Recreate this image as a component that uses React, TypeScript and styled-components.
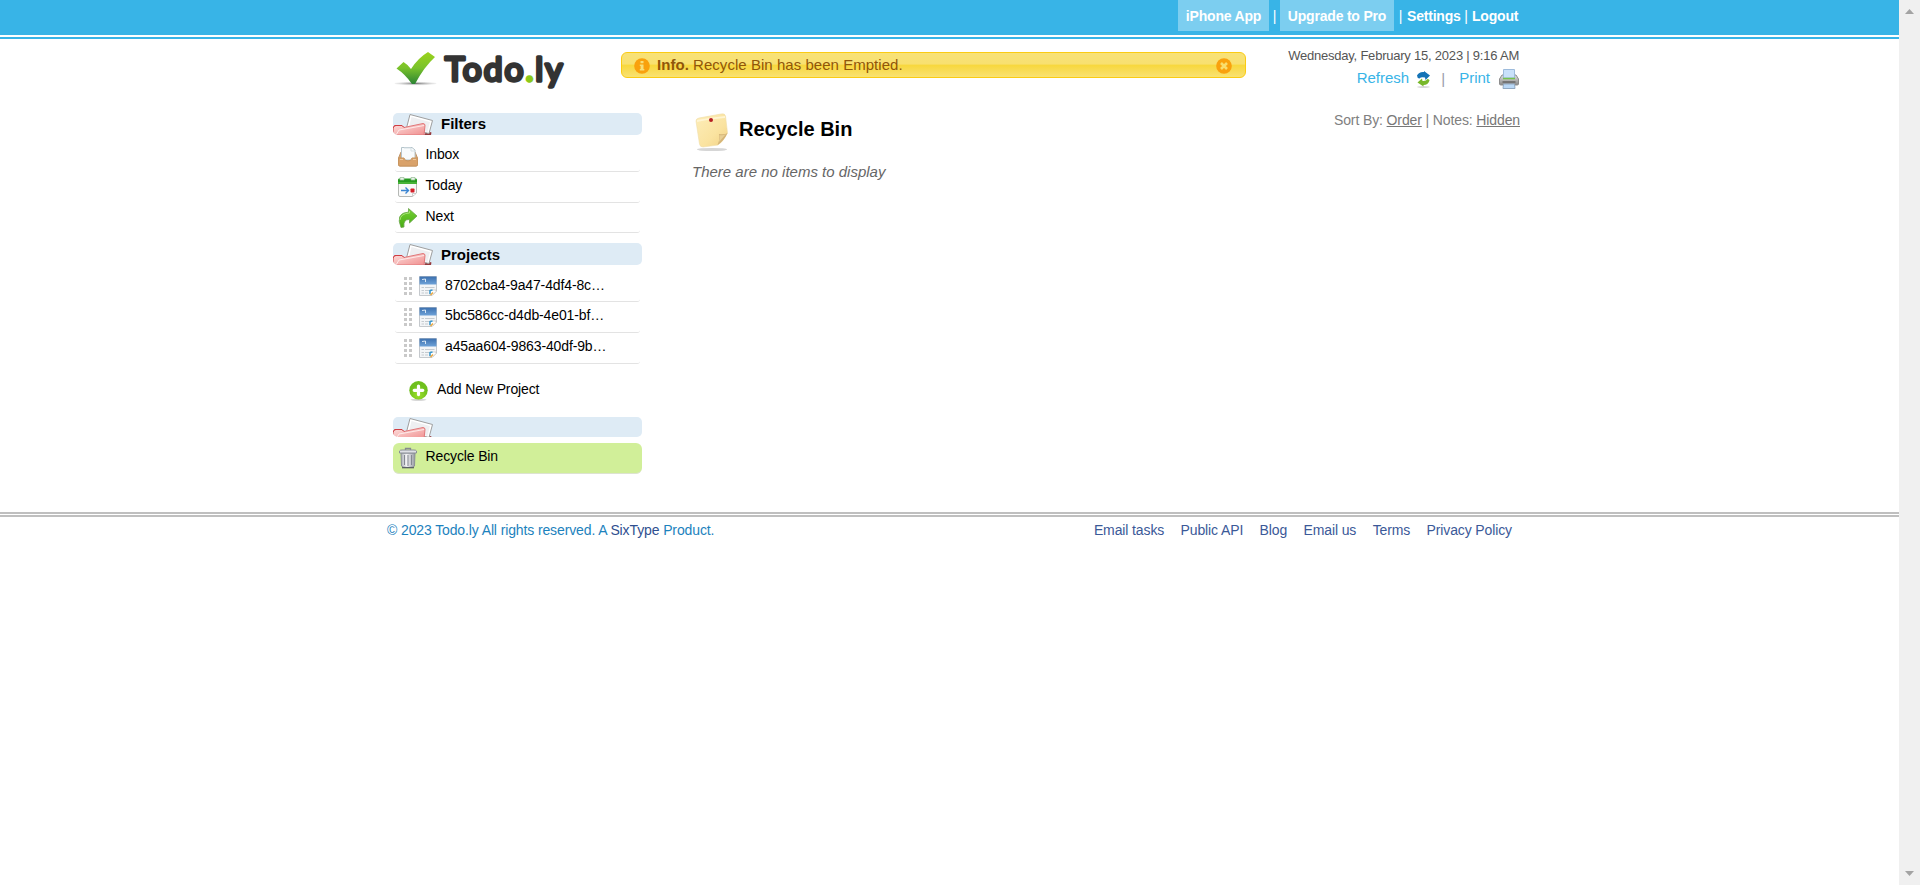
import React from 'react';
import styled, { createGlobalStyle } from 'styled-components';

const Global = createGlobalStyle`
  * { box-sizing: border-box; }
  body { margin: 0; background: #fff; font-family: Arial, "Liberation Sans", sans-serif; color: #000; overflow: hidden; }
  a { color: inherit; text-decoration: none; }
  svg { display: block; flex: none; }
`;

const Window = styled.div`
  display: flex;
  height: 885px;
`;
const Page = styled.div`
  flex: 1;
  min-width: 0;
`;
const Scrollbar = styled.div`
  width: 21px;
  background: #f0f0f0;
  display: flex;
  flex-direction: column;
  justify-content: space-between;
  align-items: center;
  padding: 9px 0;
`;

const TopBar = styled.header`
  height: 39px;
  background: #38b4e7;
  border-bottom: 2px solid #38b4e7;
  box-shadow: inset 0 -2px #fff;
`;
const Center = styled.div`
  width: 1132px;
  margin-left: 387px;
  display: flex;
`;
const TopNav = styled(Center)`
  justify-content: flex-end;
  font-size: 14px;
  letter-spacing: -0.2px;
  font-weight: bold;
  color: #fff;
  line-height: 32px;
`;
const TopLink = styled.a<{ $w: number }>`
  width: ${p => p.$w}px;
  height: 31px;
  white-space: nowrap;
`;
const TopTab = styled(TopLink)`
  background: #7ccef0;
  text-align: center;
`;
const Bar = styled.span<{ $w: number }>`
  width: ${p => p.$w}px;
  text-align: center;
  font-weight: normal;
`;

const Masthead = styled(Center)`
  height: 74px;
  align-items: flex-start;
`;
const Logo = styled.div`
  width: 234px;
  padding: 9px 0 0 7px;
  svg { overflow: visible; }
`;
const Notice = styled.div`
  width: 625px;
  height: 26px;
  margin-top: 13px;
  padding: 0 13px 0 12px;
  display: flex;
  align-items: center;
  border: 1px solid #fbcb13;
  border-radius: 6px;
  background: linear-gradient(#f8e278 0%, #f8e070 45%, #f8d83e 52%, #f8dc58 75%, #f9e272 100%);
  color: #915608;
  font-size: 15px;
  letter-spacing: 0.04px;
  line-height: 24px;
  svg { margin-top: 2px; }
`;
const NoticeText = styled.span`
  flex: 1;
  margin-left: 7px;
  padding-bottom: 1px;
`;
const Tools = styled.div`
  flex: 1;
  display: flex;
  flex-direction: column;
  align-items: flex-end;
  padding-top: 8px;
`;
const DateText = styled.div`
  font-size: 13px;
  letter-spacing: -0.22px;
  line-height: 18px;
  color: #555;
  white-space: nowrap;
`;
const ToolRow = styled.div`
  display: flex;
  align-items: center;
  height: 26px;
  font-size: 15px;
  color: #38b4e7;
  svg { margin-top: 2px; }
`;
const ToolLabel = styled.a<{ $gap: number }>`
  margin-right: ${p => p.$gap}px;
  padding-bottom: 1px;
`;
const ToolSep = styled.span`
  width: 28px;
  padding-left: 10px;
  color: #99a;
`;

const Body = styled(Center)`
  height: 399px;
  align-items: flex-start;
`;
const Sidebar = styled.nav`
  width: 249px;
  margin-left: 6px;
  font-size: 14px;
  letter-spacing: -0.13px;
`;
const SectionHead = styled.h2<{ $h?: number; $line?: number }>`
  margin: 0;
  height: ${p => p.$h ?? 22}px;
  display: flex;
  border-radius: 5px;
  overflow: hidden;
  background: #deebf5;
  font-size: 15px;
  letter-spacing: 0;
  line-height: ${p => p.$line ?? 21}px;
`;
const HeadLabel = styled.span`
  margin-left: 8px;
`;
const List = styled.ul<{ $top: number; $bottom: number }>`
  list-style: none;
  margin: 0;
  padding: ${p => p.$top}px 2px ${p => p.$bottom}px;
`;
const Item = styled.li<{ $h: number }>`
  height: ${p => p.$h}px;
  display: flex;
  align-items: center;
  border-bottom: 1px solid #e3e3e3;
  border-radius: 3px;
  padding-left: 2px;
`;
const ItemLabel = styled.span<{ $gap: number; $lift?: number }>`
  margin-left: ${p => p.$gap}px;
  padding-bottom: ${p => p.$lift ?? 3}px;
`;
const Grip = styled.span`
  display: flex;
  margin: 0 6px 0 7px;
`;
const AddRow = styled.div`
  height: 53px;
  display: flex;
  align-items: center;
  padding-left: 15px;
`;
const Selected = styled.div`
  margin-top: 6px;
  height: 31px;
  display: flex;
  align-items: center;
  padding-left: 5px;
  border-radius: 6px;
  border-bottom: 1px solid #dde3d0;
  background: #d1ef99;
`;

const Main = styled.main`
  flex: 1;
  margin-left: 50px;
`;
const TitleRow = styled.div`
  height: 40px;
  display: flex;
  align-items: flex-start;
`;
const Title = styled.h1`
  margin: 0 0 0 7px;
  font-size: 20px;
  line-height: 32px;
  flex: 1;
`;
const Sort = styled.div`
  font-size: 14px;
  letter-spacing: -0.12px;
  line-height: 15px;
  color: #808080;
  margin-right: -1px;
  u { color: #777; }
`;
const Empty = styled.p`
  margin: 10px 0 0;
  font-size: 15px;
  font-style: italic;
  line-height: 17px;
  color: #666;
`;

const Footer = styled.footer`
  border-top: 5px double #bfbfbf;
`;
const FootRow = styled(Center)`
  justify-content: space-between;
  font-size: 14px;
  letter-spacing: -0.12px;
  line-height: 16px;
  padding: 5px 7px 0 0;
  color: #1c82bd;
`;
const FootLinks = styled.div`
  display: flex;
  gap: 16.4px;
  color: #3b5998;
`;
const Brand = styled.a`
  color: #2f4f8f;
`;

const LogoArt = () => (
  <svg width="180" height="50" viewBox="0 0 180 50">
    <defs>
      <linearGradient id="chk" x1="0" y1="0" x2="0" y2="1">
        <stop offset="0" stopColor="#9bd31c" /><stop offset=".5" stopColor="#79c22b" /><stop offset="1" stopColor="#2b8434" />
      </linearGradient>
      <radialGradient id="shade"><stop offset="0" stopColor="#777" /><stop offset="1" stopColor="#bbb" stopOpacity=".2" /></radialGradient>
    </defs>
    <ellipse cx="21.500" cy="35.500" rx="21" ry="1.700" fill="url(#shade)" />
    <path d="M2.500 20.500 L9.500 14 Q13 16 17 21 Q24 10 34 4 L41 9 Q30 19 21 36 L18 36 Q11 26 2.500 20.500Z" fill="url(#chk)" />
    <text x="51" y="32.500" fontFamily="Lato, sans-serif" fontSize="33.500" fontWeight="400" letterSpacing="2" fill="#333" stroke="#333" strokeWidth="3.400" strokeLinejoin="round">
      Todo<tspan fill="#8cc919" stroke="#8cc919">.</tspan>ly
    </text>
  </svg>
);

const FolderArt = () => (
  <svg width="40" height="22" viewBox="0 0 40 22">
    <defs><linearGradient id="fold" x1="0" y1="0" x2="1" y2="1"><stop offset="0" stopColor="#fde0de" /><stop offset="1" stopColor="#f08f8f" /></linearGradient></defs>
    <path d="M31 22 L34 18 L38.500 19.500 L38 22Z" fill="#963a3d" />
    <path d="M17 1.500 L39.500 7.500 L36 20.500 L13.500 15Z" fill="#fff" stroke="#9e9e9e" />
    <path d="M18.500 4 L37 9 L34.500 19 L16 14Z" fill="#eeeff1" />
    <path d="M.500 22 V14 L3 12.500 H9 L11 14.500 L30 10.500 Q32 10.500 32 12.500 L31 22Z" fill="url(#fold)" stroke="#e0787a" />
    <path d="M0 15 L1.500 12.500 H9 L11 14.500" fill="none" stroke="#d03c42" />
    <path d="M3 22 L6 17 L31 12.500" fill="none" stroke="#fde9e8" />
  </svg>
);

const InboxArt = () => (
  <svg width="22" height="21" viewBox="0 0 22 21">
    <path d="M4 6 H18 L20.500 12 V18.500 Q20.500 20 19 20 H3 Q1.500 20 1.500 18.500 V12Z" fill="#dba56b" stroke="#c09468" />
    <path d="M4.500 1.500 H15 L18 4 V14 H4.500Z" fill="#f8fbfc" stroke="#b5c4cb" />
    <path d="M7 2 H14 V5 H17" fill="none" stroke="#d5e0e4" />
    <path d="M1.500 12 H7 Q7.500 15 11 15 Q14.500 15 15 12 H20.500 V18.500 Q20.500 20 19 20 H3 Q1.500 20 1.500 18.500Z" fill="#d9a26a" stroke="#c8955f" />
    <path d="M3 13.500 H6 M16 13.500 H19" stroke="#efc99f" />
  </svg>
);
const TodayArt = () => (
  <svg width="22" height="22" viewBox="0 0 22 22">
    <path d="M1.500 5 H19.500 V17 L15.500 20.500 H3 Q1.500 20.500 1.500 19Z" fill="#f9f9f9" stroke="#b5b8b5" />
    <path d="M1 4 Q1 2.500 2 2.500 H19 Q20 2.500 20 4 V8 H1Z" fill="#259b20" />
    <path d="M1 7 H20" stroke="#6bca51" />
    <path d="M3 1.500 H7 V4 H3Z M14 1.500 H18 V4 H14Z" fill="#e9f4e9" stroke="#95ba95" strokeWidth=".7" />
    <path d="M4 14.500 H11 M8.500 11.500 L11.500 14.500 L8.500 17.500" fill="none" stroke="#3a85d2" strokeWidth="1.400" />
    <rect x="13.500" y="12.500" width="4" height="4" rx=".8" fill="#d32029" />
    <path d="M15.500 20 V17.500 H19" fill="#fff" stroke="#bbb" strokeWidth=".7" />
  </svg>
);
const NextArt = () => (
  <svg width="22" height="22" viewBox="0 0 22 22">
    <defs><linearGradient id="nx" x1="0" y1="0" x2="0" y2="1"><stop offset="0" stopColor="#76cf37" /><stop offset="1" stopColor="#47ad13" /></linearGradient></defs>
    <path d="M4 20.500 Q-2 6 11.500 5 V1.500 L20 9 L12.500 16 V12.500 Q6 12 7 20Z" fill="url(#nx)" stroke="#6aa54a" strokeWidth=".8" strokeLinejoin="round" />
    <path d="M3 13 Q3.500 6.500 12.500 6 V4" fill="none" stroke="#a6e374" />
  </svg>
);
const GripArt = () => (
  <svg width="9" height="18" viewBox="0 0 9 18">
    {[0, 5, 10, 15].map(y => <path key={y} d={`M0 ${y} h3 v3 h-3z M5 ${y} h3 v3 h-3z`} fill="#c9c9c9" />)}
  </svg>
);
const ProjectArt = () => (
  <svg width="18" height="21" viewBox="0 0 18 21">
    <defs><linearGradient id="pj" x1="0" y1="0" x2="0" y2="1"><stop offset="0" stopColor="#3b6fae" /><stop offset="1" stopColor="#6ea2d8" /></linearGradient></defs>
    <path d="M.500 .500 H17.500 V15 L13 19.500 H.500Z" fill="#f3f5f7" stroke="#c5c9cd" />
    <rect x=".5" y=".5" width="17" height="8" fill="url(#pj)" />
    <path d="M3 3.500 L6.500 3 V6" fill="none" stroke="#d7e7f5" />
    <path d="M2.500 11.500 H5 M6 11.500 H15.500 M2.500 14.500 H5 M6 14.500 H10 M2.500 17 H5 M6 17 H9" stroke="#c5cbd0" />
    <path d="M11 19.500 V14 H17 V15.500 L13 19.500Z" fill="#fff" stroke="#bbb" strokeWidth=".6" />
    <path d="M11 18 V14.500 L13.500 14" fill="none" stroke="#3597ce" strokeWidth="1.500" />
    <path d="M11.500 19 L14 16.500" stroke="#e9a63c" strokeWidth="1.500" />
  </svg>
);
const AddArt = () => (
  <svg width="21" height="21" viewBox="0 0 21 21">
    <defs><radialGradient id="ad" cy=".75"><stop offset="0" stopColor="#9de02a" /><stop offset="1" stopColor="#6fc01d" /></radialGradient></defs>
    <ellipse cx="10.500" cy="19.800" rx="8" ry=".9" fill="#aaa" opacity=".6" />
    <circle cx="10.500" cy="10.300" r="9.200" fill="url(#ad)" />
    <path d="M10.500 6 V14.600 M6.200 10.300 H14.800" stroke="#fff" strokeWidth="3.200" strokeLinecap="round" />
  </svg>
);
const TrashArt = () => (
  <svg width="20" height="22" viewBox="0 0 20 22">
    <defs><linearGradient id="tr"><stop offset="0" stopColor="#a9adb4" /><stop offset=".4" stopColor="#f4f4f6" /><stop offset="1" stopColor="#9599a1" /></linearGradient></defs>
    <path d="M3 6 H17 L16.500 19 Q16 20.500 10 20.500 Q4 20.500 3.500 19Z" fill="url(#tr)" stroke="#8c9098" />
    <path d="M6.500 8 V18 M10 8 V19 M13.500 8 V18" stroke="#858992" />
    <path d="M7.500 3 V1.500 H12.500 V3" fill="none" stroke="#85898f" strokeWidth="1.300" />
    <path d="M1.500 6 V4 Q2 3 4 3 H16 Q18 3 18.500 4 V6Z" fill="#dfe1e6" stroke="#8a8f97" />
    <path d="M4 20.700 H16" stroke="#555960" strokeWidth="1.200" />
  </svg>
);
const InfoArt = () => (
  <svg width="16" height="16" viewBox="0 0 16 16">
    <circle cx="8" cy="8" r="7.800" fill="#f9a10d" />
    <path d="M6.500 3 H9.500 V5.200 H6.500Z M5.800 6.500 H9.500 V11 H10.300 V12.500 H5.800 V11 H6.600 V8 H5.800Z" fill="#f8df78" />
  </svg>
);
const CloseArt = () => (
  <svg width="16" height="16" viewBox="0 0 16 16">
    <circle cx="8" cy="8" r="7.800" fill="#f9a10d" />
    <path d="M5 5 L11 11 M11 5 L5 11" stroke="#f9dd6c" strokeWidth="2.600" />
  </svg>
);
const RefreshArt = () => (
  <svg width="15" height="17" viewBox="0 0 15 17">
    <ellipse cx="7.500" cy="16" rx="6.500" ry=".8" fill="#ccc" />
    <path d="M1 4.500 Q3 .500 8 1 L8 0 L14 4.500 L9.500 9 L9 6.500 Q5 5.500 3.500 7.500 Q1 7 1 4.500Z" fill="#1473b6" />
    <path d="M13.500 9.500 Q12 14 7.500 14 L7.500 15.500 L1.500 11.500 L6 7.500 L6.500 10 Q10 10.500 11.500 8 Q13.500 8 13.500 9.500Z" fill="#78b82a" />
  </svg>
);
const PrintArt = () => (
  <svg width="20" height="20" viewBox="0 0 20 20">
    <defs><linearGradient id="pr" x1="0" y1="0" x2="0" y2="1"><stop offset="0" stopColor="#e2e2e2" /><stop offset="1" stopColor="#888" /></linearGradient></defs>
    <path d="M3 6 H17 L19.500 10 V15 Q19.500 16 18 16 H2 Q.500 16 .500 15 V10Z" fill="url(#pr)" stroke="#8d8d8d" />
    <path d="M4.500 .500 H15.500 V9 H4.500Z" fill="#c9e1fa" stroke="#9dbbdc" />
    <path d="M4 9.500 H16" stroke="#75c34c" strokeWidth="1.500" />
    <path d="M3.500 13 H16.500" stroke="#666" strokeWidth="1.500" />
    <path d="M4.500 15 H15.500 L16 19.500 H4Z" fill="#bad8f6" stroke="#91a9c2" />
  </svg>
);
const NoteArt = () => (
  <svg width="40" height="40" viewBox="0 0 40 40">
    <defs><linearGradient id="nt" x1="0" y1="0" x2="1" y2="1"><stop offset="0" stopColor="#fdedb9" /><stop offset=".6" stopColor="#fae3a0" /><stop offset="1" stopColor="#f1d184" /></linearGradient></defs>
    <ellipse cx="20" cy="36.500" rx="15" ry="1.600" fill="#d6d6d6" />
    <path d="M4 8 Q4 5.500 7 5 L29 1 Q33 0 33.500 3 L35.500 20 Q31 29 26 32 L11 34 Q8 34 7.500 31Z" fill="url(#nt)" stroke="#f0dda7" strokeWidth=".6" />
    <path d="M5 7 Q16 5 33 3 V5 Q17 6 5 9Z" fill="#fff5d2" />
    <path d="M35.500 20 Q33 22 27 21 Q28 27 25.500 32 Q32 28 35.500 20Z" fill="#d4b478" />
    <path d="M34 21 Q31 23 27.500 22 Q28 25 27 29Z" fill="#e8cf94" />
    <circle cx="19" cy="7" r="2" fill="#b51e22" />
  </svg>
);

const filters = [
  { name: 'Inbox', h: 31, lift: 5, Art: InboxArt },
  { name: 'Today', h: 31, lift: 5, Art: TodayArt },
  { name: 'Next', h: 30, lift: 4, Art: NextArt },
];
const projects = [
  { name: '8702cba4-9a47-4df4-8c…', h: 31, lift: 3 },
  { name: '5bc586cc-d4db-4e01-bf…', h: 31, lift: 5 },
  { name: 'a45aa604-9863-40df-9b…', h: 31, lift: 5 },
];
const footLinks = ['Email tasks', 'Public API', 'Blog', 'Email us', 'Terms', 'Privacy Policy'];

export default function App() {
  return (
    <Window>
      <Global />
      <Page>
        <TopBar>
          <TopNav>
            <TopTab $w={91}>iPhone App</TopTab>
            <Bar $w={11}>|</Bar>
            <TopTab $w={114}>Upgrade to Pro</TopTab>
            <Bar $w={13}>|</Bar>
            <TopLink $w={53}>Settings</TopLink>
            <Bar $w={12}>|</Bar>
            <TopLink $w={47}>Logout</TopLink>
          </TopNav>
        </TopBar>
        <Masthead>
          <Logo><LogoArt /></Logo>
          <Notice>
            <InfoArt />
            <NoticeText><b>Info.</b> Recycle Bin has been Emptied.</NoticeText>
            <CloseArt />
          </Notice>
          <Tools>
            <DateText>Wednesday, February 15, 2023 | 9:16 AM</DateText>
            <ToolRow>
              <ToolLabel $gap={7}>Refresh</ToolLabel><RefreshArt />
              <ToolSep>|</ToolSep>
              <ToolLabel $gap={9}>Print</ToolLabel><PrintArt />
            </ToolRow>
          </Tools>
        </Masthead>
        <Body>
          <Sidebar>
            <SectionHead><FolderArt /><HeadLabel>Filters</HeadLabel></SectionHead>
            <List $top={6} $bottom={10}>
              {filters.map(({ name, h, lift, Art }) => (
                <Item key={name} $h={h}><Art /><ItemLabel $gap={6.5} $lift={lift}>{name}</ItemLabel></Item>
              ))}
            </List>
            <SectionHead $line={23}><FolderArt /><HeadLabel>Projects</HeadLabel></SectionHead>
            <List $top={6} $bottom={0}>
              {projects.map(({ name, h, lift }) => (
                <Item key={name} $h={h}>
                  <Grip><GripArt /></Grip><ProjectArt /><ItemLabel $gap={8} $lift={lift}>{name}</ItemLabel>
                </Item>
              ))}
            </List>
            <AddRow><AddArt /><ItemLabel $gap={8}>Add New Project</ItemLabel></AddRow>
            <SectionHead $h={20}><FolderArt /></SectionHead>
            <Selected><TrashArt /><ItemLabel $gap={7.5} $lift={5}>Recycle Bin</ItemLabel></Selected>
          </Sidebar>
          <Main>
            <TitleRow>
              <NoteArt />
              <Title>Recycle Bin</Title>
              <Sort>Sort By: <u>Order</u> | Notes: <u>Hidden</u></Sort>
            </TitleRow>
            <Empty>There are no items to display</Empty>
          </Main>
        </Body>
        <Footer>
          <FootRow>
            <span>© 2023 Todo.ly All rights reserved. A <Brand>SixType</Brand> Product.</span>
            <FootLinks>{footLinks.map(t => <a key={t}>{t}</a>)}</FootLinks>
          </FootRow>
        </Footer>
      </Page>
      <Scrollbar>
        <svg width="9" height="5" viewBox="0 0 9 5"><path d="M0 5 L4.500 0 L9 5Z" fill="#a3a3a3" /></svg>
        <svg width="9" height="5" viewBox="0 0 9 5"><path d="M0 0 L4.500 5 L9 0Z" fill="#a3a3a3" /></svg>
      </Scrollbar>
    </Window>
  );
}
